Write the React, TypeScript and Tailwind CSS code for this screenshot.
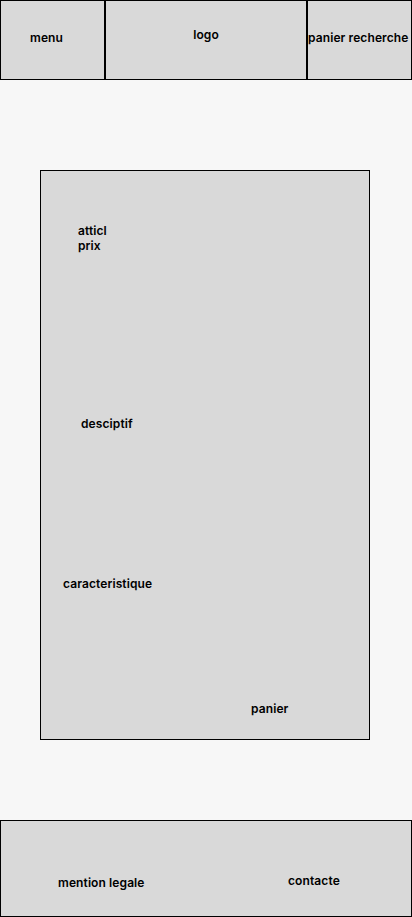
import React from 'react';

const App: React.FC = () => {
  return (
    <div
      className="min-h-[917px] w-[412px] bg-[#f7f7f7] text-[12px] leading-[15px] font-semibold tracking-[0.1px] text-black"
      style={{ fontFamily: 'Inter, "Noto Sans", sans-serif' }}
    >
      {/* Header */}
      <header className="flex h-[80px]">
        <div className="w-[105px] border border-black bg-[#d9d9d9] pl-[29px] pt-[29px]">menu</div>
        <div className="w-[202px] border border-black bg-[#d9d9d9] pt-[26px] text-center">logo</div>
        <div className="w-[105px] border border-black bg-[#d9d9d9] pt-[29px] whitespace-nowrap">panier recherche</div>
      </header>

      {/* Product card */}
      <main className="mx-[40px] mt-[90px] flex h-[570px] w-[330px] flex-col border border-black bg-[#d9d9d9] pt-[52px]">
        <div className="ml-[37px]">
          <div>atticl</div>
          <div>prix</div>
        </div>
        <div className="ml-[40px] mt-[163px]">desciptif</div>
        <div className="ml-[22px] mt-[145px]">caracteristique</div>
        <div className="ml-[210px] mt-[110px]">panier</div>
      </main>

      {/* Footer */}
      <footer className="mt-[80px] flex h-[97px] items-start border border-black bg-[#d9d9d9]">
        <div className="ml-[57px] mt-[54px] w-[183px]">mention legale</div>
        <div className="ml-[47px] mt-[52px]">contacte</div>
      </footer>
    </div>
  );
};

export default App;
